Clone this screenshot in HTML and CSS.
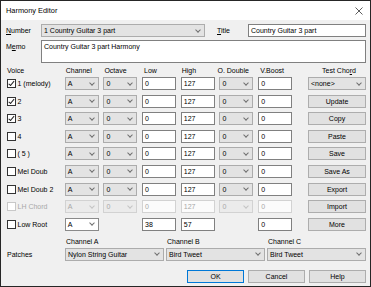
FILE: index.html
```html
<!DOCTYPE html>
<html lang="en">
  <head>
    <meta charset="UTF-8" />
    <title>Harmony Editor</title>
    <link rel="stylesheet" href="styles.css">
  </head>
  <body>
    <div class="dialog">
      <div class="titlebar">
        <span>Harmony Editor</span>
        <svg class="close" viewBox="0 0 8 8"><path d="M0.5 0.5 7.5 7.5M7.5 0.5 0.5 7.5" /></svg>
      </div>
      <div class="content">
        <div class="toprow">
          <label class="lbl-number"><u>N</u>umber</label>
          <div class="combo combo-number">1 Country Guitar 3 part</div>
          <label class="lbl-title"><u>T</u>itle</label>
          <div class="edit edit-title">Country Guitar 3 part</div>
        </div>
        <div class="memorow">
          <label>M<u>e</u>mo</label>
          <div class="edit memo">Country Guitar 3 part Harmony</div>
        </div>

        <div class="cols head">
          <span>Voice</span>
          <span>Channel</span>
          <span>Octave</span>
          <span class="pad2">Low</span>
          <span>High</span>
          <span class="pull">O. Double</span>
          <span class="pad2">V.Boost</span>
          <span class="side center">Test Cho<u>r</u>d</span>
        </div>

        <div class="cols grid">
          <!-- voice 1 -->
          <label class="check"><span class="box on"></span>1 (melody)</label>
          <div class="combo">A</div>
          <div class="combo">0</div>
          <div class="edit">0</div>
          <div class="edit">127</div>
          <div class="combo">0</div>
          <div class="edit">0</div>
          <div class="combo side">&lt;none&gt;</div>
          <!-- voice 2 -->
          <label class="check"><span class="box on"></span>2</label>
          <div class="combo">A</div>
          <div class="combo">0</div>
          <div class="edit">0</div>
          <div class="edit">127</div>
          <div class="combo">0</div>
          <div class="edit">0</div>
          <div class="btn side">Update</div>
          <!-- voice 3 -->
          <label class="check"><span class="box on"></span>3</label>
          <div class="combo">A</div>
          <div class="combo">0</div>
          <div class="edit">0</div>
          <div class="edit">127</div>
          <div class="combo">0</div>
          <div class="edit">0</div>
          <div class="btn side">Copy</div>
          <!-- voice 4 -->
          <label class="check"><span class="box"></span>4</label>
          <div class="combo">A</div>
          <div class="combo">0</div>
          <div class="edit">0</div>
          <div class="edit">127</div>
          <div class="combo">0</div>
          <div class="edit">0</div>
          <div class="btn side">Paste</div>
          <!-- voice 5 -->
          <label class="check"><span class="box"></span>( 5 )</label>
          <div class="combo">A</div>
          <div class="combo">0</div>
          <div class="edit">0</div>
          <div class="edit">127</div>
          <div class="combo">0</div>
          <div class="edit">0</div>
          <div class="btn side">Save</div>
          <!-- mel doub -->
          <label class="check"><span class="box"></span>Mel Doub</label>
          <div class="combo">A</div>
          <div class="combo">0</div>
          <div class="edit">0</div>
          <div class="edit">127</div>
          <div class="combo">0</div>
          <div class="edit">0</div>
          <div class="btn side">Save As</div>
          <!-- mel doub 2 -->
          <label class="check"><span class="box"></span>Mel Doub 2</label>
          <div class="combo">A</div>
          <div class="combo">0</div>
          <div class="edit">0</div>
          <div class="edit">127</div>
          <div class="combo">0</div>
          <div class="edit">0</div>
          <div class="btn side">Export</div>
          <!-- lh chord (disabled) -->
          <label class="check off"><span class="box"></span>LH Chord</label>
          <div class="combo off">A</div>
          <div class="combo off">0</div>
          <div class="edit off">0</div>
          <div class="edit off">127</div>
          <div class="combo off">0</div>
          <div class="edit off">0</div>
          <div class="btn side">Import</div>
          <!-- low root -->
          <label class="check"><span class="box"></span>Low Root</label>
          <div class="combo white">A</div>
          <div></div>
          <div class="edit">38</div>
          <div class="edit">57</div>
          <div></div>
          <div class="edit">0</div>
          <div class="btn side">More</div>
        </div>

        <div class="patches">
          <span></span>
          <span>Channel A</span>
          <span>Channel B</span>
          <span>Channel C</span>
          <span>Patches</span>
          <div class="combo">Nylon String Guitar</div>
          <div class="combo">Bird Tweet</div>
          <div class="combo">Bird Tweet</div>
        </div>

        <div class="actions">
          <div class="btn default">OK</div>
          <div class="btn">Cancel</div>
          <div class="btn">Help</div>
        </div>
      </div>
    </div>
  </body>
</html>
```

FILE: styles.css
```css
* {
  margin: 0px;
  padding: 0px;
  box-sizing: border-box;
}
body {
  background-color: #f0f0f0;
  font-family: "Liberation Sans", Arial, sans-serif;
  font-size: 7px;
  color: #000;
}
.dialog {
  width: 371px;
  height: 287px;
  border: 1px solid #262626;
  background-color: #f0f0f0;
  display: flex;
  flex-direction: column;
}
.titlebar {
  height: 19px;
  background-color: #fff;
  display: flex;
  align-items: center;
  justify-content: space-between;
  padding: 0 7px 0 5px;
  font-size: 7.4px;
}
.close {
  width: 8px;
  height: 8px;
  stroke: #333;
  stroke-width: 0.8;
}
.content {
  flex: 1;
  padding: 4px 4px 3px 5px;
  display: flex;
  flex-direction: column;
}
u {
  text-decoration-thickness: 0.6px;
  text-underline-offset: 1px;
}

/* top fields */
.toprow {
  display: flex;
  height: 13px;
  align-items: center;
}
.lbl-number {
  width: 35px;
}
.combo-number {
  width: 164px;
  height: 13px;
}
.lbl-title {
  width: 31px;
  margin-left: 12px;
}
.edit-title {
  flex: 1;
  height: 13px;
}
.memorow {
  display: flex;
  margin-top: 3px;
}
.memorow label {
  width: 35px;
  padding-top: 3px;
}
.memo {
  flex: 1;
  height: 23px;
  align-items: flex-start !important;
  padding-top: 2px !important;
}

/* controls */
.combo {
  display: flex;
  align-items: center;
  justify-content: space-between;
  background-color: #e3e3e3;
  border: 1px solid #acacac;
  padding: 0 4px 0 2px;
  white-space: nowrap;
}
.combo::after {
  content: "";
  width: 3px;
  height: 3px;
  border-right: 0.8px solid #707070;
  border-bottom: 0.8px solid #707070;
  transform: translateY(-1px) rotate(45deg);
}
.combo.white {
  background-color: #fff;
  border-color: #8a8a8a;
}
.combo.off {
  background-color: #ebebeb;
  border-color: #d2d2d2;
  color: #a8a8a8;
}
.combo.off::after {
  border-color: #c4c4c4;
}
.edit {
  display: flex;
  align-items: center;
  background-color: #fff;
  border: 1px solid #808080;
  padding: 0 2px;
  white-space: nowrap;
}
.edit.off {
  border-color: #d2d2d2;
  color: #a8a8a8;
  background-color: #fbfbfb;
}
.btn {
  display: flex;
  align-items: center;
  justify-content: center;
  background-color: #e1e1e1;
  border: 1px solid #adadad;
}
.btn.default {
  border-color: #0078d7;
}

/* voice table */
.cols {
  display: grid;
  grid-template-columns: 54px repeat(6, 34px) 1fr 58px;
  column-gap: 4.7px;
}
.side {
  grid-column: 9;
}
.head {
  height: 9px;
  margin-top: 2.5px;
  line-height: 9px;
}
.head span {
  padding-left: 1px;
  white-space: nowrap;
}
.head .pad2 {
  padding-left: 2px;
}
.head .pull {
  margin-left: -3px;
}
.head .center {
  text-align: center;
  padding-left: 4px;
}
.grid {
  margin-top: 2.5px;
  grid-template-rows: repeat(9, 13px);
  row-gap: 4.6px;
}
.check {
  display: flex;
  align-items: center;
  gap: 2px;
  white-space: nowrap;
  padding-left: 0.5px;
}
.box {
  width: 9px;
  height: 9px;
  border: 1px solid #333;
  background-color: #fff;
  position: relative;
}
.box.on::after {
  content: "";
  position: absolute;
  left: 2.3px;
  top: 0.3px;
  width: 2.4px;
  height: 4.6px;
  border-right: 0.9px solid #222;
  border-bottom: 0.9px solid #222;
  transform: rotate(40deg);
}
.check.off {
  color: #a8a8a8;
}
.check.off .box {
  border-color: #c8c8c8;
}

/* patches */
.patches {
  display: grid;
  grid-template-columns: 57px 1fr 1fr 1fr;
  grid-template-rows: 9px 13px;
  column-gap: 2px;
  row-gap: 1.5px;
  margin-top: 6.7px;
  line-height: 9px;
}
.patches span {
  padding-left: 1px;
  align-self: center;
}

/* bottom buttons */
.actions {
  display: flex;
  justify-content: flex-end;
  gap: 4px;
  margin-top: 9px;
  height: 13px;
}
.actions .btn {
  width: 57px;
}
```
